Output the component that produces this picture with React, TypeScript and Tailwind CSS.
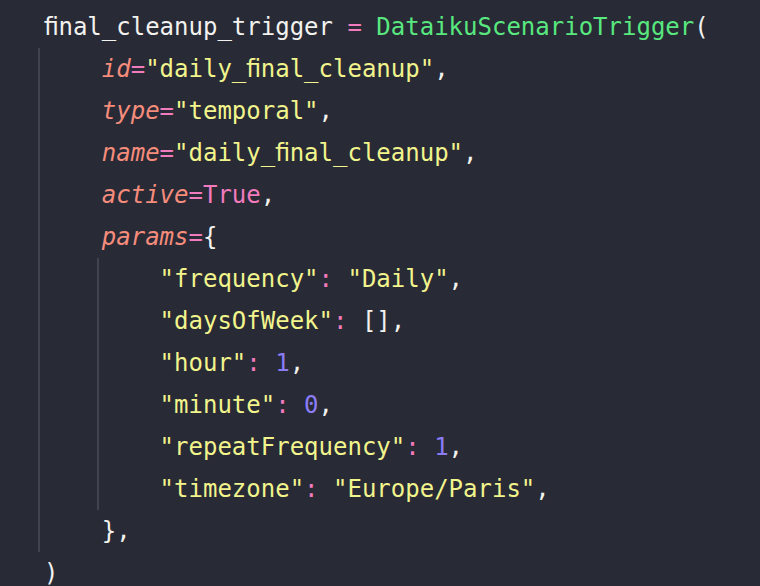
const W = ({ children }: { children: React.ReactNode }) => <span className="text-[#f2f2ee]">{children}</span>;
const P = ({ children }: { children: React.ReactNode }) => <span className="text-[#f27bbd]">{children}</span>;
const Y = ({ children }: { children: React.ReactNode }) => <span className="text-[#f2f48c]">{children}</span>;
const N = ({ children }: { children: React.ReactNode }) => <span className="text-[#8b7cf6]">{children}</span>;
const K = ({ children }: { children: React.ReactNode }) => <span className="italic text-[#f68c7b]">{children}</span>;
const G = ({ children }: { children: React.ReactNode }) => <span className="text-[#58e87f]">{children}</span>;

const Line = ({ children }: { children: React.ReactNode }) => (
  <div className="h-[42px] leading-[42px] whitespace-pre">{children}</div>
);

export default function App() {
  return (
    <div
      className="w-[760px] h-[586px] overflow-hidden bg-[#282a36] pt-[6px] pl-[38px] text-[24px]"
      style={{ fontFamily: '"DejaVu Sans Mono", monospace' }}
    >
      <div className="pl-[6px]">
        <Line>
          <W>ﬁnal_cleanup_trigger </W>
          <P>=</P>
          <W> </W>
          <G>DataikuScenarioTrigger</G>
          <W>(</W>
        </Line>
      </div>
      <div className="border-l-2 border-[#41434f] pl-[4px]">
        <Line>
          <W>    </W>
          <K>id</K>
          <P>=</P>
          <Y>"daily_ﬁnal_cleanup"</Y>
          <W>,</W>
        </Line>
        <Line>
          <W>    </W>
          <K>type</K>
          <P>=</P>
          <Y>"temporal"</Y>
          <W>,</W>
        </Line>
        <Line>
          <W>    </W>
          <K>name</K>
          <P>=</P>
          <Y>"daily_ﬁnal_cleanup"</Y>
          <W>,</W>
        </Line>
        <Line>
          <W>    </W>
          <K>active</K>
          <P>=True</P>
          <W>,</W>
        </Line>
        <Line>
          <W>    </W>
          <K>params</K>
          <P>=</P>
          <W>{"{"}</W>
        </Line>
        <div className="ml-[calc(4ch-5px)] border-l-2 border-[#41434f] pl-[3px]">
          <Line>
            <W>    </W>
            <Y>"frequency"</Y>
            <P>:</P>
            <W> </W>
            <Y>"Daily"</Y>
            <W>,</W>
          </Line>
          <Line>
            <W>    </W>
            <Y>"daysOfWeek"</Y>
            <P>:</P>
            <W> [],</W>
          </Line>
          <Line>
            <W>    </W>
            <Y>"hour"</Y>
            <P>:</P>
            <W> </W>
            <N>1</N>
            <W>,</W>
          </Line>
          <Line>
            <W>    </W>
            <Y>"minute"</Y>
            <P>:</P>
            <W> </W>
            <N>0</N>
            <W>,</W>
          </Line>
          <Line>
            <W>    </W>
            <Y>"repeatFrequency"</Y>
            <P>:</P>
            <W> </W>
            <N>1</N>
            <W>,</W>
          </Line>
          <Line>
            <W>    </W>
            <Y>"timezone"</Y>
            <P>:</P>
            <W> </W>
            <Y>"Europe/Paris"</Y>
            <W>,</W>
          </Line>
        </div>
        <Line>
          <W>    {"},"}</W>
        </Line>
      </div>
      <div className="pl-[6px]">
        <Line>
          <W>)</W>
        </Line>
      </div>
    </div>
  );
}
